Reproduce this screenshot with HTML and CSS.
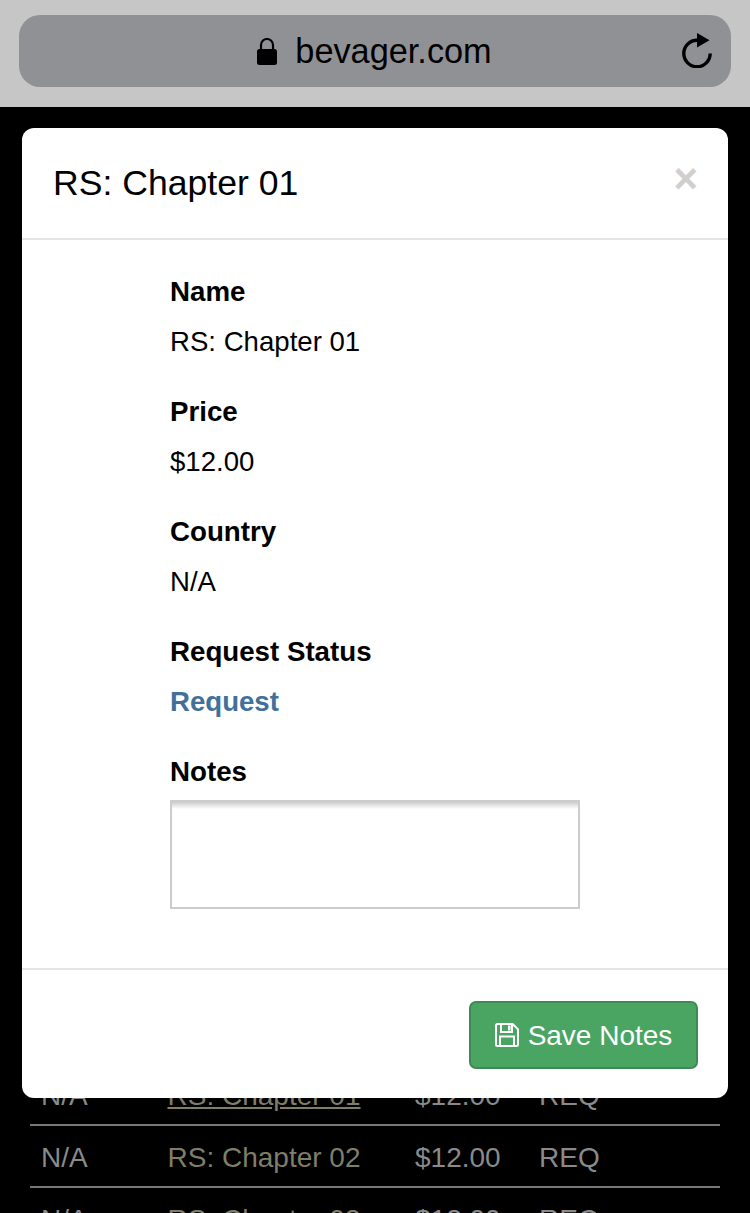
FILE: index.html
```html
<!DOCTYPE html>
<html lang="en">
<head>
<meta charset="utf-8">
<title>RS: Chapter 01</title>
<link rel="stylesheet" href="styles.css">
</head>
<body>
<header class="browser-bar">
  <div class="url-bar">
    <div class="url">
      <svg class="lock" viewBox="0 0 20 27" aria-hidden="true">
        <path d="M4 12V7a6 6 0 0 1 12 0v5" fill="none" stroke="#000" stroke-width="2.2"/>
        <rect x="0" y="11" width="20" height="16" rx="2.5" fill="#000"/>
      </svg>
      <span>bevager.com</span>
    </div>
    <svg class="reload" viewBox="0 0 30 35" aria-hidden="true">
      <path d="M28.200 20.500a13.200 13.200 0 1 1-13.200-13.200" fill="none" stroke="#000" stroke-width="3.400"/>
      <path d="M15 0l12.500 7.200L15 14.500z" fill="#000"/>
    </svg>
  </div>
</header>

<main class="page">
  <table class="orders">
    <colgroup><col class="c1"><col class="c2"><col class="c3"><col class="c4"></colgroup>
    <tbody>
      <tr><td>N/A</td><td><a class="item current">RS: Chapter 01</a></td><td>$12.00</td><td>REQ</td></tr>
      <tr><td>N/A</td><td><a class="item">RS: Chapter 02</a></td><td>$12.00</td><td>REQ</td></tr>
      <tr><td>N/A</td><td><a class="item">RS: Chapter 03</a></td><td>$12.00</td><td>REQ</td></tr>
    </tbody>
  </table>
</main>

<section class="modal">
  <div class="modal-header">
    <h2>RS: Chapter 01</h2>
    <span class="close">×</span>
  </div>
  <div class="modal-body">
    <h3>Name</h3>
    <p>RS: Chapter 01</p>
    <h3>Price</h3>
    <p>$12.00</p>
    <h3>Country</h3>
    <p>N/A</p>
    <h3>Request Status</h3>
    <p><a class="request">Request</a></p>
    <h3>Notes</h3>
    <textarea class="notes"></textarea>
  </div>
  <div class="modal-footer">
    <button class="save" type="button">
      <svg class="disk" viewBox="0 0 24 24" aria-hidden="true">
        <path d="M2.500 1h15.200L23 6.300V21.500a1.500 1.500 0 0 1-1.500 1.500h-19A1.500 1.500 0 0 1 1 21.500V2.500A1.500 1.500 0 0 1 2.500 1z" fill="none" stroke="#fff" stroke-width="2"/>
        <path d="M6 1.500V9h11V1.500M5 23v-9.500h14V23" fill="none" stroke="#fff" stroke-width="2"/>
        <rect x="13" y="2.500" width="2.500" height="5" fill="#fff"/>
      </svg>
      <span class="save-label">Save Notes</span>
    </button>
  </div>
</section>
</body>
</html>
```

FILE: styles.css
```css
* { box-sizing: border-box; }
html, body { margin: 0; height: 1213px; overflow: hidden; background: #000; }
body { font-family: "Liberation Sans", Arial, sans-serif; color: #000; position: relative; }

.browser-bar { height: 107px; background: #c6c6c6; padding: 15px 19px 20px; }
.url-bar { position: relative; height: 72px; background: #909195; border-radius: 21px; display: flex; align-items: center; justify-content: center; }
.url { display: flex; align-items: center; gap: 18px; font-size: 34.3px; margin-left: -1px; }
.lock { width: 20px; height: 27px; display: block; }
.reload { position: absolute; right: 19px; top: 18px; width: 30px; height: 35px; }

.page { padding-top: 956px; }
.orders { width: 690px; margin-left: 30px; border-collapse: collapse; table-layout: fixed; font-size: 28px; color: #8a8a8a; }
.orders td { height: 62px; padding: 4px 11px 0; border-bottom: 2px solid #777; white-space: nowrap; }
.c1 { width: 127px; } .c2 { width: 247px; } .c3 { width: 124px; }
.orders td:nth-child(2) { padding-left: 10.5px; }
.item { color: #7f7e69; }
.item.current { text-decoration: underline; }

.modal { position: absolute; left: 22px; top: 128px; width: 706px; height: 970px; background: #fff; border-radius: 12px; display: flex; flex-direction: column; }
.modal-header { height: 112px; border-bottom: 2px solid #e5e5e5; padding: 0 30px 0 31px; display: flex; justify-content: space-between; }
.modal-header h2 { margin: 34px 0 0; font-size: 35.6px; line-height: 42px; font-weight: 400; }
.close { font-size: 42px; line-height: 42px; margin-top: 30px; font-weight: 700; color: #cfcfcf; }
.modal-body { height: 728px; padding: 32px 148px 0; }
.modal-body h3 { margin: 0; font-size: 27.7px; line-height: 40px; font-weight: 700; }
.modal-body p { margin: 10px 0 30px; font-size: 27.6px; line-height: 40px; }
.request { color: #41719a; font-weight: 700; }
.notes { display: block; width: 410px; height: 109px; border: 2px solid #ccc; border-radius: 0; background: linear-gradient(#ccc, #fff 7px); padding: 0; margin: 8px 0 0; resize: none; }
.modal-footer { flex: 1; border-top: 2px solid #e5e5e5; padding: 31px 30px 0; display: flex; justify-content: flex-end; align-items: flex-start; }
.save { width: 229px; height: 68px; background: #4aa563; border: 2px solid #3f8a54; border-radius: 7px; color: #fff; font: 28px "Liberation Sans", Arial, sans-serif; display: flex; align-items: center; justify-content: center; gap: 9px; padding: 0; }
.save-label { position: relative; top: 1px; }
.disk { width: 24px; height: 24px; display: block; }
```
